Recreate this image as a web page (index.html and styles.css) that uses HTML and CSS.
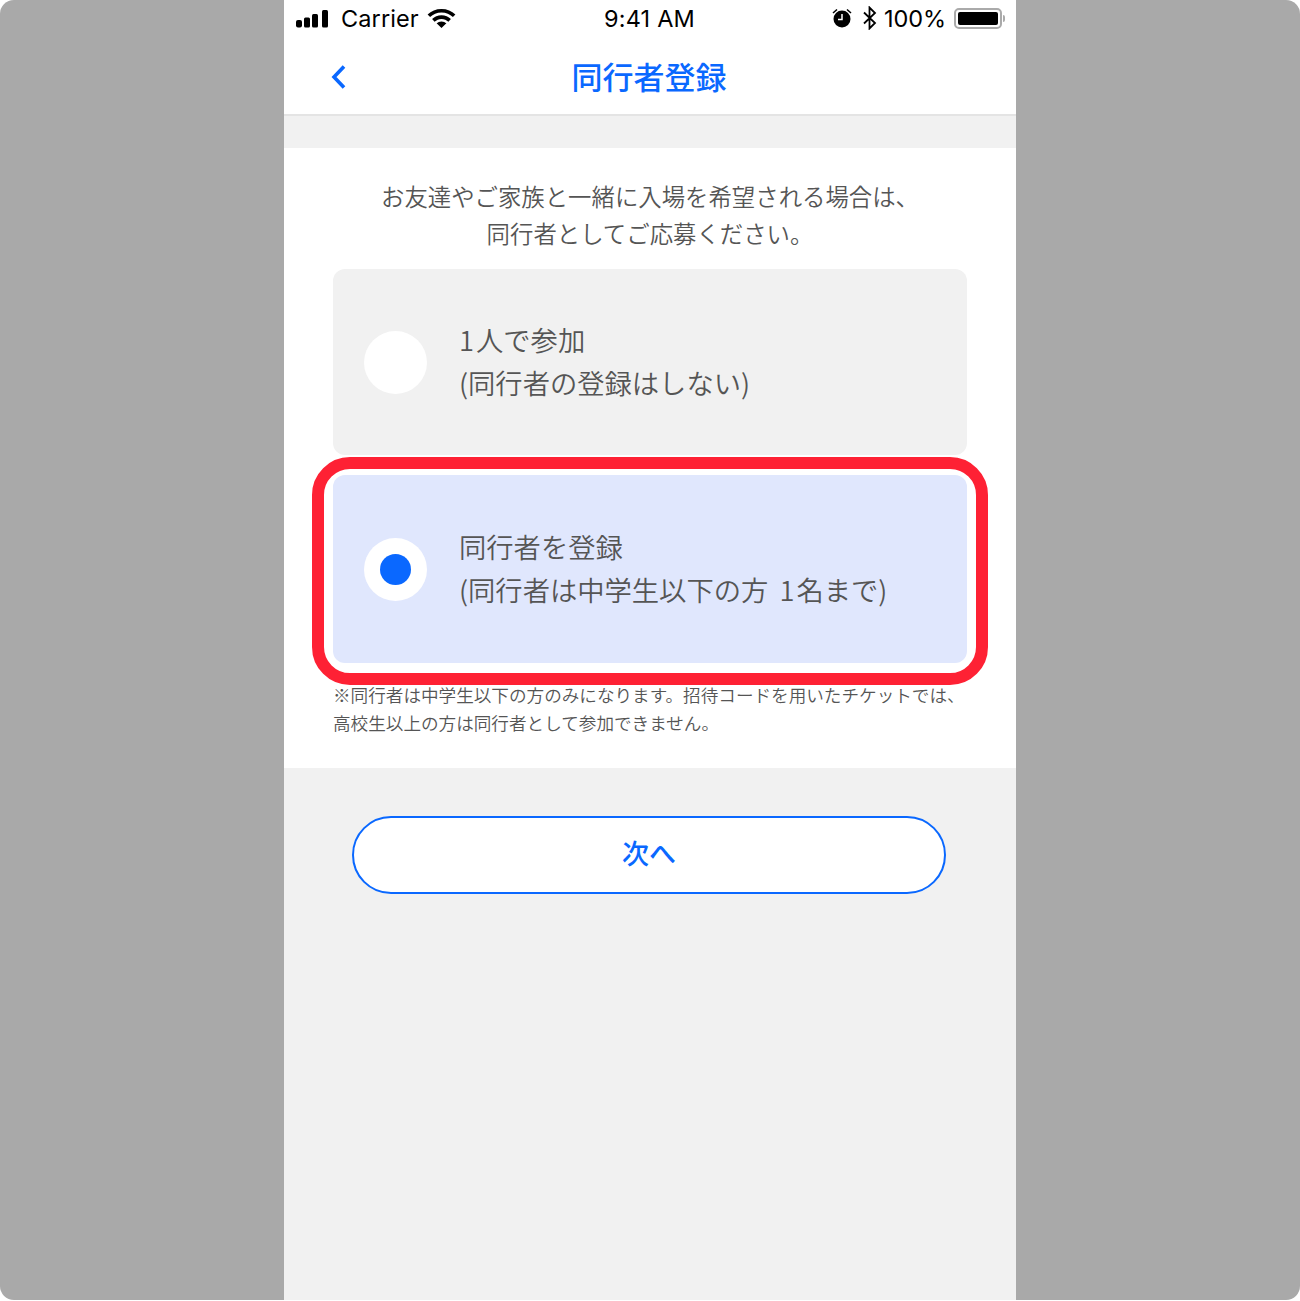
FILE: index.html
```html
<!DOCTYPE html>
<html lang="ja">
<head>
<meta charset="utf-8">
<title>同行者登録</title>
<link rel="stylesheet" href="styles.css">
</head>
<body>
<div class="stage">
  <main class="phone">
    <div class="status">
      <div class="status-left">
        <svg class="signal" width="34" height="20" viewBox="0 0 34 20"><rect x="1" y="11" width="6" height="7.500" rx="2"/><rect x="9" y="8.500" width="6" height="10" rx="1.500"/><rect x="17" y="5" width="6" height="13.500" rx="1.500"/><rect x="25" y="1" width="6" height="17.500" rx="1.500" transform="translate(2 0)"/></svg>
        <span class="carrier">Carrier</span>
        <svg class="wifi" width="29" height="20" viewBox="0 0 29 20"><path d="M14.5 1C9 1 4.200 3 .6 6.500l2.500 2.600C6 6.200 10 4.500 14.500 4.500S23 6.200 25.900 9.100l2.500-2.600C24.800 3 20 1 14.500 1zM14.500 7.300c-3.700 0-7 1.500-9.400 3.800l2.500 2.600c1.800-1.700 4.200-2.800 6.900-2.800s5.100 1.100 6.900 2.800l2.500-2.600c-2.400-2.300-5.700-3.800-9.400-3.800zM14.500 13.400c-2 0-3.600.8-4.900 1.900l4.900 4.700 4.900-4.700c-1.300-1.100-2.900-1.900-4.900-1.900z"/></svg>
      </div>
      <div class="time">9:41 AM</div>
      <div class="status-right">
        <svg class="alarm" width="22" height="22" viewBox="0 0 22 22"><circle cx="11" cy="12" r="8.500"/><path d="M2 6 6 2.500M20 6 16 2.500" stroke="#000" stroke-width="1.600" fill="none"/><path d="M11 7v5.500H7" stroke="#fff" stroke-width="1.500" fill="none"/></svg>
        <svg class="bt" width="16" height="24" viewBox="0 0 16 24"><path d="M2 6.500 13 17l-5.500 5.500v-21L13 7 2 17.500" fill="none" stroke="#000" stroke-width="1.800"/></svg>
        <span class="pct">100%</span>
        <div class="battery"><div class="battery-fill"></div></div>
        <div class="battery-tip"></div>
      </div>
    </div>
    <header class="nav">
      <svg class="back" width="18" height="26" viewBox="0 0 18 26"><path d="M14 2.500 4 13l10 10.500" fill="none" stroke="#0a68ff" stroke-width="3.600"/></svg>
      <h1 class="title">同行者登録</h1>
    </header>
    <section class="panel">
      <p class="intro">お友達やご家族と一緒に入場を希望される場合は、<br>同行者としてご応募ください。</p>
      <div class="option">
        <span class="radio"></span>
        <div class="option-text"><span class="digit">1</span>人で参加<br>(同行者の登録はしない)</div>
      </div>
      <div class="option option-selected">
        <span class="radio"><span class="radio-dot"></span></span>
        <div class="option-text">同行者を登録<br>(同行者は中学生以下の方 <span class="digit">1</span>名まで)</div>
        <div class="highlight"></div>
      </div>
      <p class="note">※同行者は中学生以下の方のみになります。招待コードを用いたチケットでは、<br>高校生以上の方は同行者として参加できません。</p>
    </section>
    <div class="actions">
      <button class="next" type="button">次へ</button>
    </div>
  </main>
</div>
</body>
</html>
```
FILE: styles.css
```css
* { box-sizing: border-box; }
html, body { margin: 0; padding: 0; background: #fff; }
body { height: 1301px; overflow: hidden; font-family: "Noto Sans CJK JP", "Noto Sans", sans-serif; }
.stage { width: 1300px; height: 1300px; background: #a9a9a9; border-radius: 14px; overflow: hidden; display: flex; justify-content: center; }
.phone { width: 732px; height: 1300px; background: #f1f1f1; display: flex; flex-direction: column; }
.status { height: 38px; background: #fff; display: grid; grid-template-columns: 1fr auto 1fr; align-items: center; padding: 0 11px 2px; color: #000; font-family: Inter, "Liberation Sans", sans-serif; font-size: 23.5px; }
.status-left { display: flex; align-items: center; }
.signal { margin-right: 12px; margin-top: 2px; }
.wifi { margin-left: 8px; }
.carrier { letter-spacing: 0.1px; }
.time { letter-spacing: 0.2px; margin-left: -1px; }
.status-right { display: flex; align-items: center; justify-content: flex-end; }
.alarm { margin-right: 9px; }
.bt { margin-right: 6px; }
.pct { margin-right: 8px; letter-spacing: -0.1px; }
.battery { width: 48px; height: 21px; border: 2px solid #aaa; border-radius: 5px; padding: 2px; }
.battery-fill { width: 100%; height: 100%; background: #000; border-radius: 2px; }
.battery-tip { width: 2px; height: 7px; background: #aaa; margin-left: 1px; border-radius: 0 2px 2px 0; }
.nav { height: 78px; background: #fff; border-bottom: 2px solid #e4e4e4; display: flex; align-items: center; justify-content: center; padding-bottom: 1px; padding-right: 2px; position: relative; }
.back { position: absolute; left: 46px; top: 26px; }
.title { margin: 0; font-size: 31px; font-weight: 500; color: #0a68ff; line-height: 1; }
.panel { margin-top: 32px; background: #fff; padding: 30px 49px 31px; color: #555; }
.intro { margin: 0 0 17px; font-size: 23.4px; line-height: 37px; text-align: center; font-weight: 350; white-space: nowrap; }
.option { position: relative; height: 186px; background: #f1f1f1; border-radius: 12px; margin-bottom: 20px; display: flex; align-items: center; padding-left: 31px; }
.option-selected { height: 188px; background: #e0e7fd; margin-bottom: 18px; }
.option-text { margin-left: 32px; font-size: 27.3px; line-height: 43px; font-weight: 350; white-space: nowrap; padding-bottom: 2px; word-spacing: 5px; }
.digit { letter-spacing: 2px; }
.radio { flex: none; width: 63px; height: 63px; border-radius: 50%; background: #fff; display: flex; align-items: center; justify-content: center; }
.radio-dot { width: 31px; height: 31px; border-radius: 50%; background: #0a68ff; }
.highlight { position: absolute; left: -21px; top: -18px; width: 676px; height: 228px; border: 12px solid #fe2134; border-radius: 38px; }
.note { margin: 0; font-size: 17.6px; line-height: 28px; font-weight: 350; white-space: nowrap; }
.actions { padding: 48px 70px 0 68px; }
.next { display: block; width: 594px; height: 78px; border: 2px solid #0a68ff; border-radius: 39px; background: #fff; color: #0a68ff; font-family: inherit; font-size: 27px; line-height: 1; font-weight: 500; padding: 0 0 5px; }
```
